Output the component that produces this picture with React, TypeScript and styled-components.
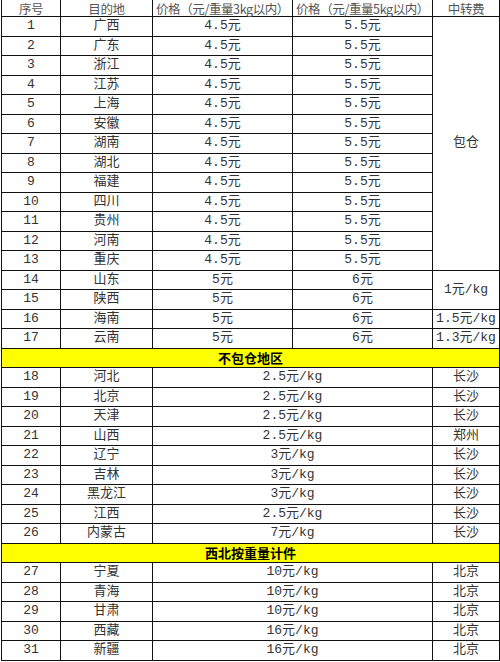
import React from 'react'
import styled, { createGlobalStyle } from 'styled-components'

const GlobalStyle = createGlobalStyle`
  html, body {
    margin: 0;
    padding: 0;
    background: #fff;
  }
`

const Page = styled.div`
  width: 500px;
  height: 662px;
  padding-left: 1px;
  box-sizing: border-box;
  overflow: hidden;
  background: #fff;
`

const Sheet = styled.table`
  width: 498px;
  border-collapse: collapse;
  table-layout: fixed;
  font-family: "Liberation Mono", "Noto Sans CJK SC", monospace;
  font-size: 13px;
  color: #333;
`

const HeadCell = styled.th`
  height: 14px;
  padding: 2px 0 0;
  border: 1px solid #111;
  border-top: none;
  font-family: "Noto Sans CJK SC", sans-serif;
  font-size: 12.5px;
  font-weight: normal;
  color: #555;
  text-align: center;
  white-space: nowrap;
  letter-spacing: -0.4px;
  line-height: 14px;
`

const Cell = styled.td`
  height: 18.5px;
  padding: 0;
  border: 1px solid #111;
  text-align: center;
  white-space: nowrap;
  line-height: 16px;
  vertical-align: middle;
`

const Band = styled.td`
  height: 18.5px;
  padding: 0;
  border: 1px solid #111;
  background: #ffff00;
  color: #000;
  font-weight: bold;
  text-align: center;
  font-family: "Noto Sans CJK SC", sans-serif;
  font-size: 13px;
  line-height: 16px;
`

type Row = [number, string, string, string?]

const packed: Row[] = [
  [1, '广西', '4.5元', '5.5元'],
  [2, '广东', '4.5元', '5.5元'],
  [3, '浙江', '4.5元', '5.5元'],
  [4, '江苏', '4.5元', '5.5元'],
  [5, '上海', '4.5元', '5.5元'],
  [6, '安徽', '4.5元', '5.5元'],
  [7, '湖南', '4.5元', '5.5元'],
  [8, '湖北', '4.5元', '5.5元'],
  [9, '福建', '4.5元', '5.5元'],
  [10, '四川', '4.5元', '5.5元'],
  [11, '贵州', '4.5元', '5.5元'],
  [12, '河南', '4.5元', '5.5元'],
  [13, '重庆', '4.5元', '5.5元'],
]

const extra: Row[] = [
  [18, '河北', '2.5元/kg', '长沙'],
  [19, '北京', '2.5元/kg', '长沙'],
  [20, '天津', '2.5元/kg', '长沙'],
  [21, '山西', '2.5元/kg', '郑州'],
  [22, '辽宁', '3元/kg', '长沙'],
  [23, '吉林', '3元/kg', '长沙'],
  [24, '黑龙江', '3元/kg', '长沙'],
  [25, '江西', '2.5元/kg', '长沙'],
  [26, '内蒙古', '7元/kg', '长沙'],
]

const northwest: Row[] = [
  [27, '宁夏', '10元/kg', '北京'],
  [28, '青海', '10元/kg', '北京'],
  [29, '甘肃', '10元/kg', '北京'],
  [30, '西藏', '16元/kg', '北京'],
  [31, '新疆', '16元/kg', '北京'],
]

const WeightRows = ({ rows }: { rows: Row[] }) => (
  <>
    {rows.map(r => (
      <tr key={r[0]}>
        <Cell>{r[0]}</Cell>
        <Cell>{r[1]}</Cell>
        <Cell colSpan={2}>{r[2]}</Cell>
        <Cell>{r[3]}</Cell>
      </tr>
    ))}
  </>
)

export default function App() {
  return (
    <Page>
      <GlobalStyle />
      <Sheet>
        <colgroup>
          <col style={{ width: 59 }} />
          <col style={{ width: 92 }} />
          <col style={{ width: 140 }} />
          <col style={{ width: 140 }} />
          <col style={{ width: 67 }} />
        </colgroup>
        <thead>
          <tr>
            <HeadCell>序号</HeadCell>
            <HeadCell>目的地</HeadCell>
            <HeadCell>价格（元/重量3kg以内）</HeadCell>
            <HeadCell>价格（元/重量5kg以内）</HeadCell>
            <HeadCell>中转费</HeadCell>
          </tr>
        </thead>
        <tbody>
          {packed.map((r, i) => (
            <tr key={r[0]}>
              <Cell>{r[0]}</Cell>
              <Cell>{r[1]}</Cell>
              <Cell>{r[2]}</Cell>
              <Cell>{r[3]}</Cell>
              {i === 0 && <Cell rowSpan={13}>包仓</Cell>}
            </tr>
          ))}
          <tr>
            <Cell>14</Cell>
            <Cell>山东</Cell>
            <Cell>5元</Cell>
            <Cell>6元</Cell>
            <Cell rowSpan={2}>1元/kg</Cell>
          </tr>
          <tr>
            <Cell>15</Cell>
            <Cell>陕西</Cell>
            <Cell>5元</Cell>
            <Cell>6元</Cell>
          </tr>
          <tr>
            <Cell>16</Cell>
            <Cell>海南</Cell>
            <Cell>5元</Cell>
            <Cell>6元</Cell>
            <Cell>1.5元/kg</Cell>
          </tr>
          <tr>
            <Cell>17</Cell>
            <Cell>云南</Cell>
            <Cell>5元</Cell>
            <Cell>6元</Cell>
            <Cell>1.3元/kg</Cell>
          </tr>
          <tr>
            <Band colSpan={5}>不包仓地区</Band>
          </tr>
          <WeightRows rows={extra} />
          <tr>
            <Band colSpan={5}>西北按重量计件</Band>
          </tr>
          <WeightRows rows={northwest} />
        </tbody>
      </Sheet>
    </Page>
  )
}
